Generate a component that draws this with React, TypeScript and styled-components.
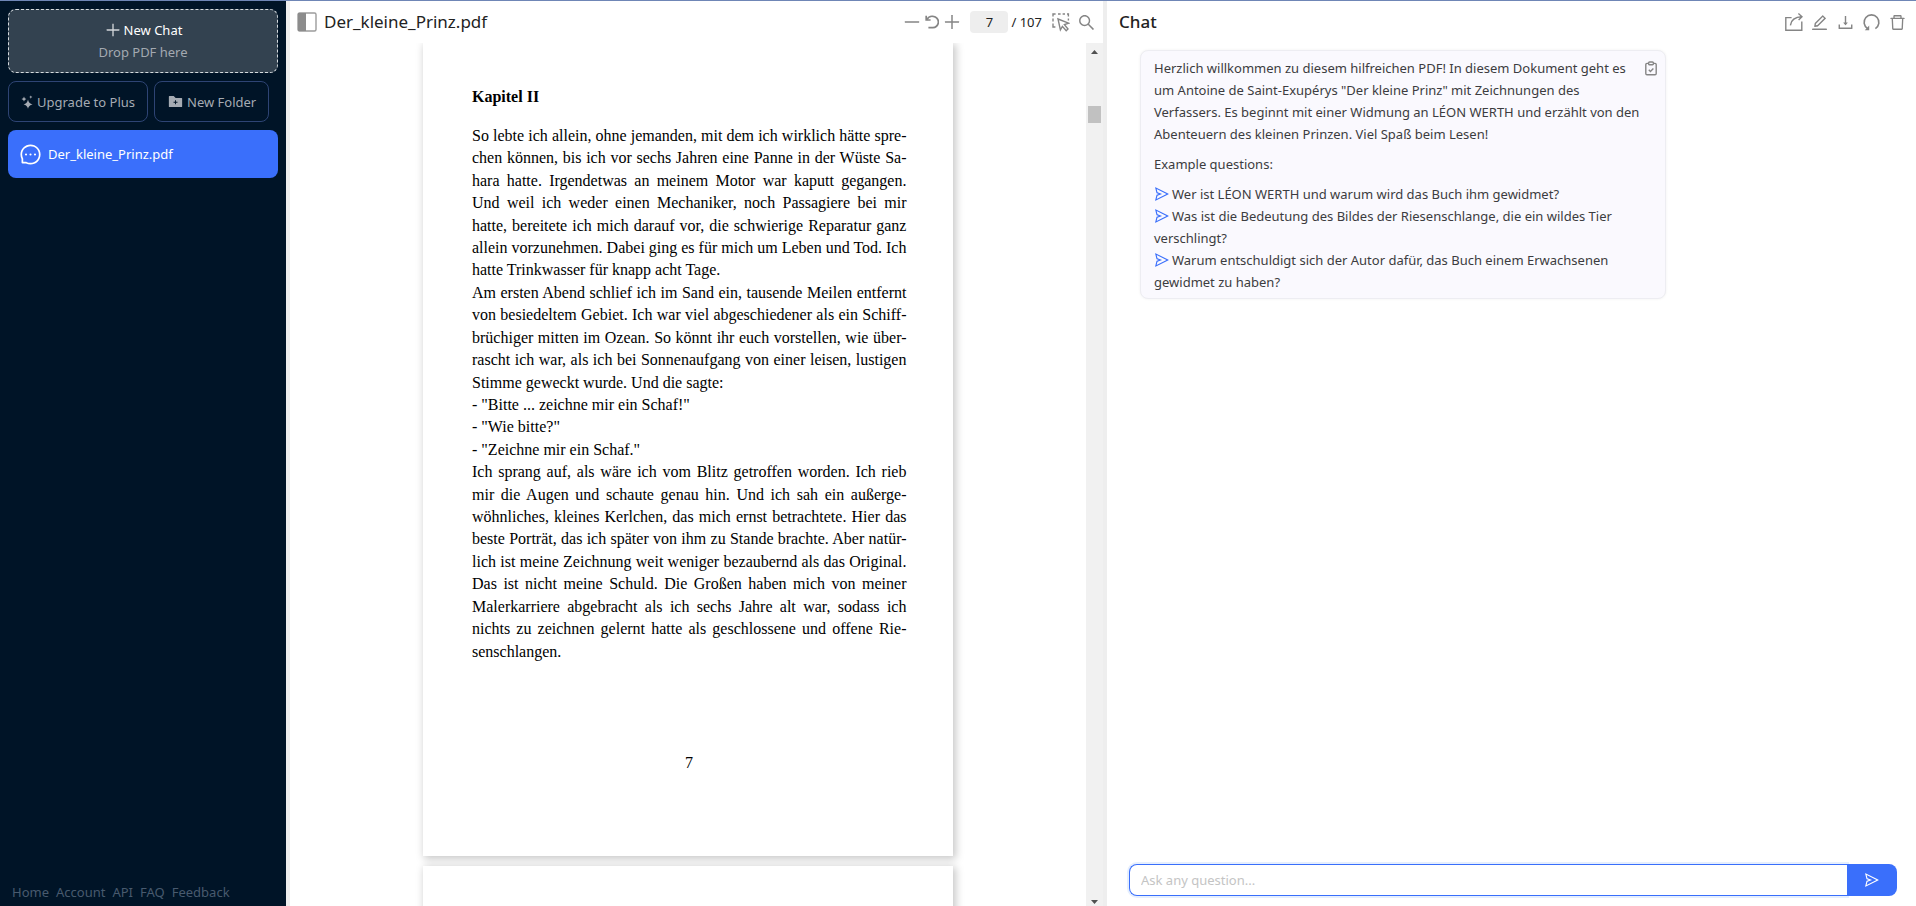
import React from "react";
import styled, { createGlobalStyle } from "styled-components";
import {
  AiFillFolderAdd,
  AiOutlineDelete,
  AiOutlineDownload,
  AiOutlineEdit,
  AiOutlineMessage,
  AiOutlineMinus,
  AiOutlinePlus,
  AiOutlineSearch,
  AiOutlineSend,
} from "react-icons/ai";

const UI_FONT = '"Noto Sans", "Open Sans", "Liberation Sans", sans-serif';
const BLUE = "#3a6ffb";

const GlobalStyle = createGlobalStyle`
  *, *::before, *::after { box-sizing: border-box; }
  body { margin: 0; background: #fff; font-family: ${UI_FONT}; font-size: 13px; line-height: 22px; color: #222; }
  button, input { font: inherit; color: inherit; margin: 0; }
  button { cursor: pointer; }
  h1, h2, p, ul { margin: 0; padding: 0; }
  svg { display: block; flex: none; }
`;

const Shell = styled.div`
  display: flex;
  height: 100vh;
  border-top: 1px solid #6f86b6;
`;

const Sidebar = styled.aside`
  flex: 0 0 286px;
  display: flex;
  flex-direction: column;
  gap: 8px;
  padding: 8px 8px 3px;
  background: #001427;
`;

const Divider = styled.div`
  flex: 0 0 4px;
  background: #eeeeee;
`;

const DropZone = styled.button`
  display: flex;
  flex-direction: column;
  align-items: center;
  padding: 9px;
  border: 1px dashed #d5dade;
  border-radius: 8px;
  background: #334250;
  color: #fff;
`;

const DropTitle = styled.span`
  display: flex;
  align-items: center;
  gap: 2px;
`;

const DropHint = styled.span`
  color: #a3a9b0;
`;

const ButtonRow = styled.div`
  display: flex;
  gap: 6px;
`;

const OutlineButton = styled.button`
  display: flex;
  align-items: center;
  gap: 3px;
  height: 41px;
  padding: 0 12px;
  border: 1px solid #2e4474;
  border-radius: 8px;
  background: transparent;
  color: #a5abb3;
  white-space: nowrap;
`;

const ChatEntry = styled.a`
  display: flex;
  align-items: center;
  gap: 6px;
  height: 48px;
  padding: 0 11px;
  border-radius: 8px;
  background: ${BLUE};
  color: #fff;
  text-decoration: none;
`;

const FooterNav = styled.nav`
  display: flex;
  gap: 7px;
  margin-top: auto;
  padding: 0 4px;

  a {
    color: #485a6e;
    text-decoration: none;
  }
`;

const Viewer = styled.main`
  flex: 813 1 0;
  min-width: 0;
  display: flex;
  flex-direction: column;
`;

const PanelHeader = styled.header`
  flex: 0 0 42px;
  display: flex;
  align-items: center;
  padding: 0 7px;
`;

const ChatHeader = styled(PanelHeader)`
  padding: 0 9px 0 12px;
`;

const FileTitle = styled.h1`
  margin-left: 7px;
  margin-right: auto;
  font-size: 17px;
  font-weight: 400;
`;

const ChatTitle = styled.h2`
  margin-right: auto;
  font-size: 17px;
  font-weight: 500;
`;

const IconButton = styled.button`
  display: flex;
  padding: 0;
  border: 0;
  background: transparent;
  color: #858585;
`;

const Tools = styled.div<{ $gap: number }>`
  display: flex;
  align-items: center;
  gap: ${(p) => p.$gap}px;
`;

const PageBox = styled.label`
  display: flex;
  align-items: center;
  gap: 3px;
  margin: 0 10px 0 8px;
`;

const PageInput = styled.input`
  width: 38px;
  height: 22px;
  padding: 0;
  border: 0;
  border-radius: 4px;
  background: #eeeeee;
  text-align: center;
`;

const Scroller = styled.div`
  flex: 1;
  min-height: 0;
  display: flex;
`;

const Pages = styled.div`
  flex: 1;
  display: flex;
  flex-direction: column;
  align-items: center;
  gap: 10px;
  overflow: hidden;
`;

const Page = styled.article`
  flex: none;
  width: 530px;
  min-height: 300px;
  padding: 43px 47px 82px 49px;
  background: #fff;
  box-shadow: 2px 2px 8px 1px rgba(0, 0, 0, 0.22);
  font-family: "Liberation Serif", serif;
  font-size: 16px;
  color: #000;
`;

const Chapter = styled.h2`
  margin-bottom: 17px;
  font-size: 16px;
  font-weight: 700;
`;

const TextLayer = styled.div`
  display: grid;
  grid-auto-rows: 1fr;
  height: 538px;
`;

const Line = styled.div<{ $last: boolean }>`
  white-space: nowrap;
  text-align: justify;
  text-align-last: ${(p) => (p.$last ? "left" : "justify")};
`;

const PageNumber = styled.p`
  margin-top: 89px;
  text-align: center;
`;

const Scrollbar = styled.div`
  flex: 0 0 17px;
  display: flex;
  flex-direction: column;
  align-items: center;
  padding: 7px 0 2px;
  background: #f1f1f1;
`;

const Thumb = styled.div`
  width: 13px;
  height: 17px;
  margin: 52px 0 auto;
  background: #c1c1c1;
`;

const Chat = styled.section`
  flex: 809 1 0;
  min-width: 0;
  display: flex;
  flex-direction: column;
`;

const Messages = styled.div`
  flex: 1;
  padding: 7px 33px;
`;

const Bubble = styled.div`
  position: relative;
  width: 526px;
  padding: 6px 12px 5px 13px;
  border: 1px solid #ededf2;
  border-radius: 8px;
  background: #faf9fe;
  box-shadow: 0 0 3px rgba(0, 0, 0, 0.06);
  color: #3c3c40;
`;

const CopyButton = styled(IconButton)`
  position: absolute;
  top: 10px;
  right: 8px;
`;

const Paragraph = styled.p`
  margin-bottom: 8px;
  white-space: pre-line;
`;

const Questions = styled.ul`
  list-style: none;
`;

const Question = styled.a`
  color: inherit;
  text-decoration: none;
  white-space: pre-line;

  svg {
    display: inline-block;
    margin-right: 2px;
    vertical-align: -3px;
    color: ${BLUE};
  }
`;

const AskForm = styled.form`
  display: flex;
  height: 32px;
  margin: 0 19px 10px 22px;
`;

const AskInput = styled.input`
  flex: 1;
  min-width: 0;
  padding: 0 11px;
  border: 1px solid ${BLUE};
  border-right: 0;
  border-radius: 8px 0 0 8px;
  outline: none;
  box-shadow: 0 0 0 2px #e6effe;

  &::placeholder {
    color: #c4c4c4;
    opacity: 1;
  }
`;

const SendButton = styled.button`
  position: relative;
  display: flex;
  align-items: center;
  justify-content: center;
  width: 50px;
  border: 0;
  border-radius: 0 8px 8px 0;
  background: ${BLUE};
  color: #fff;
`;

const SparkIcon = () => (
  <svg width="13" height="14" viewBox="0 0 13 14" fill="currentColor" aria-hidden="true">
    <path d="M7 4.5Q7.6 8.4 11.6 9.4Q7.6 10.3 7 13.8Q6.3 10.3 2.6 9.4Q6.3 8.4 7 4.5Z" />
    <path d="M3 1.6Q3.3 3.6 5.4 4.1Q3.3 4.6 3 6.6Q2.7 4.6 .5 4.1Q2.7 3.6 3 1.6Z" />
    <path d="M9.8 .4Q10 1.7 11.4 2.1Q10 2.4 9.8 3.8Q9.5 2.4 8.2 2.1Q9.5 1.7 9.8 .4Z" />
  </svg>
);

const PanelIcon = () => (
  <svg width="20" height="20" viewBox="0 0 20 20" fill="none" aria-hidden="true">
    <rect x="1" y="1" width="18" height="18" rx="1.5" stroke="#9c9c9c" strokeWidth="1.4" />
    <path d="M1 1h8v18H1z" fill="#8c8c8c" />
  </svg>
);

const RotateIcon = () => (
  <svg width="14" height="14" viewBox="0 0 14 14" fill="none" stroke="currentColor" strokeWidth="1.7" aria-hidden="true">
    <path d="M1.2 .8V5H5.6" />
    <path d="M1.6 4.8C3.4 1.8 6.2 1 8.2 1.4A5.5 5.5 0 0 1 7.4 12.6H3.4" />
  </svg>
);

const SelectIcon = () => (
  <svg width="18" height="19" viewBox="0 0 18 19" fill="none" stroke="currentColor" strokeWidth="1.4" aria-hidden="true">
    <path d="M1 3.6V1H3.6M6 1H8.6M10.6 1H13M15 1H16.4V3.6M16.4 5.6V7.6M1 5.6V8.4M1 10.4V14H3.4" />
    <path d="M6 6L16.6 10.2L12.4 11.6L16 16L14.2 17.8L10.4 13.4L8.4 16.8Z" />
  </svg>
);

const ShareIcon = () => (
  <svg width="18" height="18" viewBox="0 0 18 18" fill="none" stroke="currentColor" strokeWidth="1.4" aria-hidden="true">
    <path d="M6.6 4.6H.8V17.2H16.8V8.4" />
    <path d="M5.4 12.4C6 7.4 9.4 4 17 3.8M13.4 .6L17 3.8L13.6 7" />
  </svg>
);

const ResetIcon = () => (
  <svg width="19" height="19" viewBox="0 0 19 19" fill="none" stroke="currentColor" strokeWidth="1.6" aria-hidden="true">
    <path d="M5.6 15.6A7.4 7.4 0 1 1 13.4 15.6" />
    <path d="M7.2 12.6V17.2H2.8Z" fill="currentColor" stroke="none" />
  </svg>
);

const ClipboardIcon = () => (
  <svg width="12" height="15" viewBox="0 0 12 15" fill="none" stroke="currentColor" strokeWidth="1.4" aria-hidden="true">
    <path d="M3.6 2.4H2A1.2 1.2 0 0 0 .8 3.6V12.6A1.2 1.2 0 0 0 2 13.8H10A1.2 1.2 0 0 0 11.2 12.6V3.6A1.2 1.2 0 0 0 10 2.4H8.4" />
    <rect x="3.6" y="1" width="4.8" height="2.8" rx="1" />
    <path d="M3.8 8.8L5.4 10.4L8.4 7.4" />
  </svg>
);

const ArrowIcon = ({ down }: { down?: boolean }) => (
  <svg width="7" height="4" viewBox="0 0 7 4" fill="#505050" aria-hidden="true">
    <path d={down ? "M0 0H7L3.5 4Z" : "M0 4H7L3.5 0Z"} />
  </svg>
);

const LINES: [string, boolean?][] = [
  ["So lebte ich allein, ohne jemanden, mit dem ich wirklich hätte spre-"],
  ["chen können, bis ich vor sechs Jahren eine Panne in der Wüste Sa-"],
  ["hara hatte. Irgendetwas an meinem Motor war kaputt gegangen."],
  ["Und weil ich weder einen Mechaniker, noch Passagiere bei mir"],
  ["hatte, bereitete ich mich darauf vor, die schwierige Reparatur ganz"],
  ["allein vorzunehmen. Dabei ging es für mich um Leben und Tod. Ich"],
  ["hatte Trinkwasser für knapp acht Tage.", true],
  ["Am ersten Abend schlief ich im Sand ein, tausende Meilen entfernt"],
  ["von besiedeltem Gebiet. Ich war viel abgeschiedener als ein Schiff-"],
  ["brüchiger mitten im Ozean. So könnt ihr euch vorstellen, wie über-"],
  ["rascht ich war, als ich bei Sonnenaufgang von einer leisen, lustigen"],
  ["Stimme geweckt wurde. Und die sagte:", true],
  ['- "Bitte ... zeichne mir ein Schaf!"', true],
  ['- "Wie bitte?"', true],
  ['- "Zeichne mir ein Schaf."', true],
  ["Ich sprang auf, als wäre ich vom Blitz getroffen worden. Ich rieb"],
  ["mir die Augen und schaute genau hin. Und ich sah ein außerge-"],
  ["wöhnliches, kleines Kerlchen, das mich ernst betrachtete. Hier das"],
  ["beste Porträt, das ich später von ihm zu Stande brachte. Aber natür-"],
  ["lich ist meine Zeichnung weit weniger bezaubernd als das Original."],
  ["Das ist nicht meine Schuld. Die Großen haben mich von meiner"],
  ["Malerkarriere abgebracht als ich sechs Jahre alt war, sodass ich"],
  ["nichts zu zeichnen gelernt hatte als geschlossene und offene Rie-"],
  ["senschlangen.", true],
];

const WELCOME = `Herzlich willkommen zu diesem hilfreichen PDF! In diesem Dokument geht es
um Antoine de Saint-Exupérys "Der kleine Prinz" mit Zeichnungen des
Verfassers. Es beginnt mit einer Widmung an LÉON WERTH und erzählt von den
Abenteuern des kleinen Prinzen. Viel Spaß beim Lesen!`;

const QUESTIONS = [
  "Wer ist LÉON WERTH und warum wird das Buch ihm gewidmet?",
  "Was ist die Bedeutung des Bildes der Riesenschlange, die ein wildes Tier\nverschlingt?",
  "Warum entschuldigt sich der Autor dafür, das Buch einem Erwachsenen\ngewidmet zu haben?",
];

const FOOTER_LINKS = ["Home", "Account", "API", "FAQ", "Feedback"];

export default function App() {
  return (
    <>
      <GlobalStyle />
      <Shell>
        <Sidebar>
          <DropZone type="button">
            <DropTitle>
              <AiOutlinePlus size={18} color="#d3d6da" />
              New Chat
            </DropTitle>
            <DropHint>Drop PDF here</DropHint>
          </DropZone>
          <ButtonRow>
            <OutlineButton type="button">
              <SparkIcon />
              Upgrade to Plus
            </OutlineButton>
            <OutlineButton type="button">
              <AiFillFolderAdd size={17} />
              New Folder
            </OutlineButton>
          </ButtonRow>
          <ChatEntry href="#chat">
            <AiOutlineMessage size={23} />
            Der_kleine_Prinz.pdf
          </ChatEntry>
          <FooterNav>
            {FOOTER_LINKS.map((name) => (
              <a key={name} href={`#${name.toLowerCase()}`}>
                {name}
              </a>
            ))}
          </FooterNav>
        </Sidebar>
        <Divider />
        <Viewer>
          <PanelHeader>
            <IconButton type="button" aria-label="Toggle sidebar">
              <PanelIcon />
            </IconButton>
            <FileTitle>Der_kleine_Prinz.pdf</FileTitle>
            <Tools $gap={3}>
              <IconButton type="button" aria-label="Zoom out">
                <AiOutlineMinus size={20} />
              </IconButton>
              <IconButton type="button" aria-label="Rotate">
                <RotateIcon />
              </IconButton>
              <IconButton type="button" aria-label="Zoom in">
                <AiOutlinePlus size={20} />
              </IconButton>
            </Tools>
            <PageBox>
              <PageInput defaultValue="7" aria-label="Page" />
              <span>/ 107</span>
            </PageBox>
            <Tools $gap={7}>
              <IconButton type="button" aria-label="Select area">
                <SelectIcon />
              </IconButton>
              <IconButton type="button" aria-label="Search">
                <AiOutlineSearch size={19} />
              </IconButton>
            </Tools>
          </PanelHeader>
          <Scroller>
            <Pages>
              <Page>
                <Chapter>Kapitel II</Chapter>
                <TextLayer>
                  {LINES.map(([text, last]) => (
                    <Line key={text} $last={Boolean(last)}>
                      {text}
                    </Line>
                  ))}
                </TextLayer>
                <PageNumber>7</PageNumber>
              </Page>
              <Page />
            </Pages>
            <Scrollbar>
              <ArrowIcon />
              <Thumb />
              <ArrowIcon down />
            </Scrollbar>
          </Scroller>
        </Viewer>
        <Divider />
        <Chat>
          <ChatHeader>
            <ChatTitle>Chat</ChatTitle>
            <Tools $gap={7}>
              <IconButton type="button" aria-label="Share">
                <ShareIcon />
              </IconButton>
              <IconButton type="button" aria-label="Rename">
                <AiOutlineEdit size={19} />
              </IconButton>
              <IconButton type="button" aria-label="Download">
                <AiOutlineDownload size={19} />
              </IconButton>
              <IconButton type="button" aria-label="Reset">
                <ResetIcon />
              </IconButton>
              <IconButton type="button" aria-label="Delete">
                <AiOutlineDelete size={19} />
              </IconButton>
            </Tools>
          </ChatHeader>
          <Messages>
            <Bubble>
              <CopyButton type="button" aria-label="Copy">
                <ClipboardIcon />
              </CopyButton>
              <Paragraph>{WELCOME}</Paragraph>
              <Paragraph>Example questions:</Paragraph>
              <Questions>
                {QUESTIONS.map((question) => (
                  <li key={question}>
                    <Question href="#ask">
                      <AiOutlineSend size={16} />
                      {question}
                    </Question>
                  </li>
                ))}
              </Questions>
            </Bubble>
          </Messages>
          <AskForm onSubmit={(event) => event.preventDefault()}>
            <AskInput placeholder="Ask any question..." aria-label="Ask any question" />
            <SendButton type="submit" aria-label="Send">
              <AiOutlineSend size={16} />
            </SendButton>
          </AskForm>
        </Chat>
      </Shell>
    </>
  );
}
